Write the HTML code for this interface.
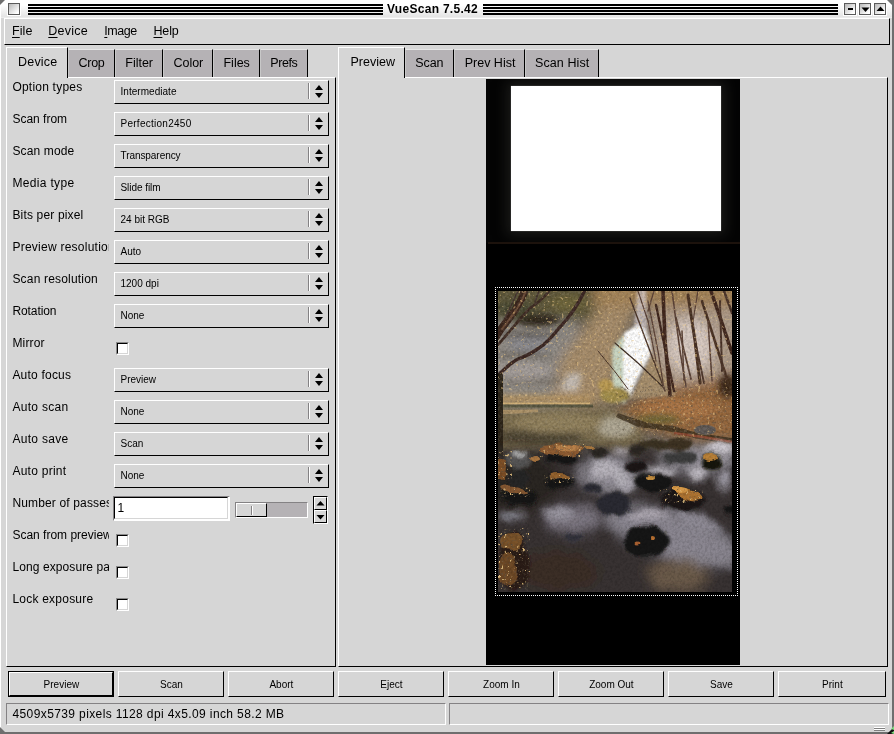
<!DOCTYPE html><html><head><meta charset="utf-8"><title>VueScan 7.5.42</title><style>
html,body{margin:0;padding:0;}
body{width:894px;height:734px;overflow:hidden;background:#6e6e6e;position:relative;font-family:"Liberation Sans",sans-serif;color:#000;}
div,span{position:absolute;box-sizing:border-box;}
.t{white-space:pre;line-height:16px;height:16px;}
#win{left:0;top:0;width:892px;height:732px;background:#d6d6d6;clip-path:polygon(5px 0,887px 0,892px 5px,892px 732px,5px 732px,0 727px,0 5px);overflow:hidden;will-change:transform;}
#title{left:0;top:0;width:892px;height:18px;background:linear-gradient(#ffffff 0,#ffffff 5px,#e4e4e4 17px,#f4f4f4 18px);}
.stripes{top:4px;height:11px;background:repeating-linear-gradient(#000 0,#000 2px,transparent 2px,transparent 3px);}
.wb{top:3px;width:12px;height:12px;border:1px solid #5a5a5a;background:linear-gradient(135deg,#b8b8b8,#fff 85%);box-shadow:0 0 0 1px #fff;}
.raise{border:1px solid;border-color:#fff #000 #000 #fff;background:#d6d6d6;}
.tab{background:#b5b2b5;border-top:1px solid #e6e6e6;border-right:1px solid #000;border-left:1px solid #c8c8c8;}
.tabsel{background:#d6d6d6;border-top:1px solid #fff;border-left:1px solid #fff;border-right:1px solid #000;}
.dd{border:1px solid;border-color:#fff #000 #000 #fff;background:#d6d6d6;width:215px;height:24px;left:114px;}
.dd i{position:absolute;left:193px;top:2px;width:0;height:16px;border-left:1px solid #848284;border-right:1px solid #fff;}
.dd svg{position:absolute;left:199px;top:3px;}
.cb{width:13px;height:13px;left:116px;border:1px solid;border-color:#8a8a8a #fff #fff #8a8a8a;background:#fff;}
.cb:before{content:"";position:absolute;left:0;top:0;width:11px;height:11px;box-sizing:border-box;border:1px solid;border-color:#000 #d6d6d6 #d6d6d6 #000;}
.btn{top:671px;width:106px;height:26px;border:1px solid;border-color:#fff #000 #000 #fff;background:#d6d6d6;}
.t u{text-decoration:underline;text-underline-offset:2px;text-decoration-thickness:1px;}
.inset{border:1px solid;border-color:#848284 #fff #fff #848284;}
</style></head><body>
<div id="win">
<div id="title"></div>
<div class="wb" style="left:8px"></div>
<div class="stripes" style="left:28px;width:355px"></div>
<div class="stripes" style="left:483px;width:355px"></div>
<span class="t" style="left:387.00px;top:0.84px;font-size:12px;letter-spacing:0.290px;font-weight:bold;">VueScan 7.5.42</span>
<div class="wb" style="left:844px">
<div style="left:3px;top:4px;width:5px;height:2px;background:#000"></div>
</div>
<div class="wb" style="left:859px">
<svg width="11" height="11" style="position:absolute;left:0;top:0"><path d="M1.5 3.5h8l-4 4.5z" fill="#000"/></svg>
</div>
<div class="wb" style="left:874px">
<svg width="11" height="11" style="position:absolute;left:0;top:0"><path d="M1.5 7h8l-4-4.5z" fill="#000"/></svg>
</div>
<div style="left:0;top:6px;width:1px;height:722px;background:#fff"></div>
<div class="raise" style="left:4px;top:18px;width:886px;height:27px"></div>
<span class="t" style="left:12.00px;top:22.67px;font-size:12.5px;letter-spacing:0.090px;"><u>F</u>ile</span>
<span class="t" style="left:48.30px;top:22.67px;font-size:12.5px;letter-spacing:0.215px;"><u>D</u>evice</span>
<span class="t" style="left:104.30px;top:22.67px;font-size:12.5px;letter-spacing:-0.448px;"><u>I</u>mage</span>
<span class="t" style="left:153.50px;top:22.67px;font-size:12.5px;letter-spacing:-0.177px;"><u>H</u>elp</span>
<div style="left:6px;top:77px;width:330px;height:590px;border:1px solid;border-color:#fff #000 #000 #fff;background:#d6d6d6"></div>
<div class="tabsel" style="left:6px;top:47px;width:62px;height:31px"></div>
<div class="tab" style="left:68px;top:49px;width:47px;height:28px"></div>
<div class="tab" style="left:115px;top:49px;width:48px;height:28px"></div>
<div class="tab" style="left:163px;top:49px;width:50px;height:28px"></div>
<div class="tab" style="left:213px;top:49px;width:47px;height:28px"></div>
<div class="tab" style="left:260px;top:49px;width:48px;height:28px"></div>
<span class="t" style="left:18.00px;top:54.17px;font-size:12.5px;letter-spacing:0.215px;">Device</span>
<span class="t" style="left:78.50px;top:55.37px;font-size:12.5px;letter-spacing:-0.273px;">Crop</span>
<span class="t" style="left:125.30px;top:55.37px;font-size:12.5px;letter-spacing:-0.013px;">Filter</span>
<span class="t" style="left:173.40px;top:55.37px;font-size:12.5px;letter-spacing:0.006px;">Color</span>
<span class="t" style="left:223.50px;top:55.37px;font-size:12.5px;letter-spacing:-0.018px;">Files</span>
<span class="t" style="left:270.20px;top:55.37px;font-size:12.5px;letter-spacing:-0.375px;">Prefs</span>
<div style="left:7px;top:78px;width:101.5px;height:560px;overflow:hidden">
<span class="t" style="left:5.40px;top:0.64px;font-size:12px;letter-spacing:0.219px;">Option types</span>
<span class="t" style="left:5.40px;top:32.64px;font-size:12px;letter-spacing:0.002px;">Scan from</span>
<span class="t" style="left:5.40px;top:64.64px;font-size:12px;letter-spacing:0.144px;">Scan mode</span>
<span class="t" style="left:5.40px;top:96.64px;font-size:12px;letter-spacing:0.330px;">Media type</span>
<span class="t" style="left:5.40px;top:128.64px;font-size:12px;letter-spacing:0.165px;">Bits per pixel</span>
<span class="t" style="left:5.40px;top:160.64px;font-size:12px;letter-spacing:0.248px;">Preview resolution</span>
<span class="t" style="left:5.40px;top:192.64px;font-size:12px;letter-spacing:0.186px;">Scan resolution</span>
<span class="t" style="left:5.40px;top:224.64px;font-size:12px;letter-spacing:-0.087px;">Rotation</span>
<span class="t" style="left:5.40px;top:256.64px;font-size:12px;letter-spacing:0.163px;">Mirror</span>
<span class="t" style="left:5.40px;top:288.64px;font-size:12px;letter-spacing:0.210px;">Auto focus</span>
<span class="t" style="left:5.40px;top:320.64px;font-size:12px;letter-spacing:0.293px;">Auto scan</span>
<span class="t" style="left:5.40px;top:352.64px;font-size:12px;letter-spacing:0.293px;">Auto save</span>
<span class="t" style="left:5.40px;top:384.64px;font-size:12px;letter-spacing:0.264px;">Auto print</span>
<span class="t" style="left:5.40px;top:416.64px;font-size:12px;letter-spacing:0.151px;">Number of passes</span>
<span class="t" style="left:5.40px;top:448.64px;font-size:12px;">Scan from preview</span>
<span class="t" style="left:5.40px;top:480.64px;font-size:12px;letter-spacing:0.096px;">Long exposure pass</span>
<span class="t" style="left:5.40px;top:512.64px;font-size:12px;letter-spacing:0.227px;">Lock exposure</span>
</div>
<div class="dd" style="top:80px"><i></i><svg width="10" height="16" viewBox="0 0 10 16"><path d="M1 6h8l-4-5zM1 9h8l-4 5z" fill="#000"/></svg></div>
<span class="t" style="left:120.50px;top:84.03px;font-size:10px;letter-spacing:0.035px;">Intermediate</span>
<div class="dd" style="top:112px"><i></i><svg width="10" height="16" viewBox="0 0 10 16"><path d="M1 6h8l-4-5zM1 9h8l-4 5z" fill="#000"/></svg></div>
<span class="t" style="left:120.50px;top:116.03px;font-size:10px;letter-spacing:0.266px;">Perfection2450</span>
<div class="dd" style="top:144px"><i></i><svg width="10" height="16" viewBox="0 0 10 16"><path d="M1 6h8l-4-5zM1 9h8l-4 5z" fill="#000"/></svg></div>
<span class="t" style="left:120.50px;top:148.03px;font-size:10px;letter-spacing:-0.064px;">Transparency</span>
<div class="dd" style="top:176px"><i></i><svg width="10" height="16" viewBox="0 0 10 16"><path d="M1 6h8l-4-5zM1 9h8l-4 5z" fill="#000"/></svg></div>
<span class="t" style="left:120.50px;top:180.03px;font-size:10px;letter-spacing:-0.057px;">Slide film</span>
<div class="dd" style="top:208px"><i></i><svg width="10" height="16" viewBox="0 0 10 16"><path d="M1 6h8l-4-5zM1 9h8l-4 5z" fill="#000"/></svg></div>
<span class="t" style="left:120.50px;top:212.03px;font-size:10px;">24 bit RGB</span>
<div class="dd" style="top:240px"><i></i><svg width="10" height="16" viewBox="0 0 10 16"><path d="M1 6h8l-4-5zM1 9h8l-4 5z" fill="#000"/></svg></div>
<span class="t" style="left:120.50px;top:244.03px;font-size:10px;">Auto</span>
<div class="dd" style="top:272px"><i></i><svg width="10" height="16" viewBox="0 0 10 16"><path d="M1 6h8l-4-5zM1 9h8l-4 5z" fill="#000"/></svg></div>
<span class="t" style="left:120.50px;top:276.04px;font-size:10px;">1200 dpi</span>
<div class="dd" style="top:304px"><i></i><svg width="10" height="16" viewBox="0 0 10 16"><path d="M1 6h8l-4-5zM1 9h8l-4 5z" fill="#000"/></svg></div>
<span class="t" style="left:120.50px;top:308.04px;font-size:10px;">None</span>
<div class="cb" style="top:342px"></div>
<div class="dd" style="top:368px"><i></i><svg width="10" height="16" viewBox="0 0 10 16"><path d="M1 6h8l-4-5zM1 9h8l-4 5z" fill="#000"/></svg></div>
<span class="t" style="left:120.50px;top:372.04px;font-size:10px;">Preview</span>
<div class="dd" style="top:400px"><i></i><svg width="10" height="16" viewBox="0 0 10 16"><path d="M1 6h8l-4-5zM1 9h8l-4 5z" fill="#000"/></svg></div>
<span class="t" style="left:120.50px;top:404.04px;font-size:10px;">None</span>
<div class="dd" style="top:432px"><i></i><svg width="10" height="16" viewBox="0 0 10 16"><path d="M1 6h8l-4-5zM1 9h8l-4 5z" fill="#000"/></svg></div>
<span class="t" style="left:120.50px;top:436.04px;font-size:10px;">Scan</span>
<div class="dd" style="top:464px"><i></i><svg width="10" height="16" viewBox="0 0 10 16"><path d="M1 6h8l-4-5zM1 9h8l-4 5z" fill="#000"/></svg></div>
<span class="t" style="left:120.50px;top:468.04px;font-size:10px;">None</span>
<div style="left:113px;top:496px;width:117px;height:25px;border:1px solid;border-color:#848284 #fff #fff #848284;background:#fff"><div style="left:0;top:0;width:114px;height:22px;border:1px solid;border-color:#000 #d6d6d6 #d6d6d6 #000"></div></div>
<span class="t" style="left:117.50px;top:500.34px;font-size:12px;">1</span>
<div style="left:235px;top:502px;width:73px;height:16px;background:#b5b2b5;border:1px solid;border-color:#848284 #fff #fff #848284"></div>
<div class="raise" style="left:236px;top:503px;width:31px;height:14px"><div style="left:14px;top:2px;width:2px;height:9px;border-left:1px solid #848284;border-right:1px solid #fff"></div></div>
<div style="left:313px;top:496px;width:15px;height:28px;border:1px solid;border-color:#000 #fff #fff #000;background:#d6d6d6"><div class="raise" style="left:0;top:0;width:13px;height:13px"></div><div class="raise" style="left:0;top:13px;width:13px;height:13px"></div><svg width="13" height="26" style="position:absolute;left:0;top:0"><path d="M2.5 8.5h8l-4-4.5zM2.5 18h8l-4 4.5z" fill="#000"/></svg></div>
<div class="cb" style="top:534px"></div>
<div class="cb" style="top:566px"></div>
<div class="cb" style="top:598px"></div>
<div style="left:338px;top:77px;width:550px;height:590px;border:1px solid;border-color:#fff #000 #000 #fff;background:#d6d6d6"></div>
<div class="tabsel" style="left:338px;top:47px;width:67px;height:31px"></div>
<div class="tab" style="left:405px;top:49px;width:49px;height:28px"></div>
<div class="tab" style="left:454px;top:49px;width:71px;height:28px"></div>
<div class="tab" style="left:525px;top:49px;width:74px;height:28px"></div>
<span class="t" style="left:350.40px;top:54.17px;font-size:12.5px;letter-spacing:0.035px;">Preview</span>
<span class="t" style="left:415.20px;top:55.37px;font-size:12.5px;letter-spacing:-0.073px;">Scan</span>
<span class="t" style="left:464.70px;top:55.37px;font-size:12.5px;">Prev Hist</span>
<span class="t" style="left:535.10px;top:55.37px;font-size:12.5px;letter-spacing:0.079px;">Scan Hist</span>
<div id="img" style="left:486px;top:79px;width:254px;height:586px;background:#000;overflow:hidden">
<div style="left:0;top:0;width:254px;height:164px;overflow:hidden;background:#040404"><div style="left:35px;top:17px;width:190px;height:125px;box-shadow:0 0 12px 14px #1b1b19"></div></div>
<div style="left:1px;top:0;width:253px;height:586px">
<div style="left:24px;top:7px;width:210px;height:145px;background:#fff;box-shadow:0 0 1px 0 #888"></div>
<div style="left:1px;top:163px;width:252px;height:2px;background:#1c120c"></div>
<div style="left:8px;top:208px;width:243px;height:1px;background:repeating-linear-gradient(90deg,#fff 0,#fff 1px,#000 1px,#000 2px)"></div>
<div style="left:8px;top:516px;width:243px;height:1px;background:repeating-linear-gradient(90deg,#fff 0,#fff 1px,#000 1px,#000 2px)"></div>
<div style="left:8px;top:208px;width:1px;height:309px;background:repeating-linear-gradient(#fff 0,#fff 1px,#000 1px,#000 2px)"></div>
<div style="left:250px;top:208px;width:1px;height:309px;background:repeating-linear-gradient(#fff 0,#fff 1px,#000 1px,#000 2px)"></div>
<svg width="234" height="301" viewBox="0 0 234 301" style="position:absolute;left:11px;top:212px">
<defs>
<filter id="b8" x="-30%" y="-30%" width="160%" height="160%"><feGaussianBlur stdDeviation="6"/></filter>
<filter id="b4" x="-30%" y="-30%" width="160%" height="160%"><feGaussianBlur stdDeviation="3"/></filter>
<filter id="b2" x="-30%" y="-30%" width="160%" height="160%"><feGaussianBlur stdDeviation="1.5"/></filter>
<filter id="b1" x="-30%" y="-30%" width="160%" height="160%"><feGaussianBlur stdDeviation="0.7"/></filter>
<filter id="sp" x="0" y="0" width="100%" height="100%"><feTurbulence type="fractalNoise" baseFrequency="0.33" numOctaves="3" seed="7" result="n"/>
<feColorMatrix in="n" type="matrix" values="0 0 0 0 0.84  0 0 0 0 0.58  0 0 0 0 0.24  6 6 0 0 -7.2"/></filter>
<filter id="spd" x="0" y="0" width="100%" height="100%"><feTurbulence type="fractalNoise" baseFrequency="0.45" numOctaves="2" seed="11" result="n"/>
<feColorMatrix in="n" type="matrix" values="0 0 0 0 0.12  0 0 0 0 0.09  0 0 0 0 0.06  -3.2 -3.2 0 0 2.9"/></filter>
<filter id="warp" x="0" y="0" width="100%" height="100%"><feTurbulence type="fractalNoise" baseFrequency="0.06" numOctaves="2" seed="4" result="t"/><feDisplacementMap in="SourceGraphic" in2="t" scale="9" xChannelSelector="R" yChannelSelector="G"/></filter>
<filter id="grain" x="0" y="0" width="100%" height="100%"><feTurbulence type="fractalNoise" baseFrequency="0.4" numOctaves="2" seed="9" result="n"/>
<feColorMatrix in="n" type="matrix" values="0 0 0 0 0  0 0 0 0 0  0 0 0 0 0  2.2 0 0 0 -0.85"/></filter>
<filter id="grainw" x="0" y="0" width="100%" height="100%"><feTurbulence type="fractalNoise" baseFrequency="0.4" numOctaves="2" seed="21" result="n"/>
<feColorMatrix in="n" type="matrix" values="0 0 0 0 1  0 0 0 0 0.95  0 0 0 0 0.9  2.2 0 0 0 -0.9"/></filter>
<clipPath id="pc"><rect x="0" y="0" width="234" height="301"/></clipPath>
<clipPath id="cTop"><polygon points="0,0 234,0 234,135 190,150 130,140 118,112 0,112"/></clipPath>
<clipPath id="cLeaf"><path d="M42,152h44v14h-44zM0,160h14v28h-14zM0,237h32v63h-32zM161,198h44v14h-44zM46,184h30v8h-30zM2,196h30v10h-30z"/></clipPath>
</defs>
<g clip-path="url(#pc)">
<rect width="234" height="301" fill="#6b6258"/>
<g filter="url(#b8)">
<rect x="-20" y="-20" width="125" height="50" fill="#5c5438"/>
<rect x="-20" y="30" width="100" height="85" fill="#8d8882"/>
<polygon points="55,112 62,70 95,25 125,-10 150,-10 125,45 112,112" fill="#a48a68"/>
<rect x="150" y="-20" width="110" height="125" fill="#ab9886"/>
<rect x="95" y="-20" width="165" height="36" fill="#a08054"/>
<ellipse cx="192" cy="55" rx="24" ry="28" fill="#d6c8c0"/>
<rect x="-20" y="116" width="165" height="45" fill="#786a4c"/>
<polygon points="118,120 160,98 260,82 260,148 190,150 150,138" fill="#93653a"/>
</g>
<g filter="url(#b4)">
<ellipse cx="40" cy="29" rx="22" ry="6" fill="#2a2418"/>
<ellipse cx="32" cy="53" rx="22" ry="8" fill="#88878b"/>
<ellipse cx="30" cy="44" rx="30" ry="2.5" fill="#55504a"/>
<ellipse cx="26" cy="64" rx="28" ry="2" fill="#5e5850"/>
<ellipse cx="40" cy="90" rx="36" ry="2" fill="#6e665c"/>
<ellipse cx="18" cy="18" rx="20" ry="8" fill="#4a4a30"/>
<ellipse cx="70" cy="12" rx="18" ry="8" fill="#6a6238"/>
<ellipse cx="25" cy="80" rx="28" ry="9" fill="#a09a96"/>
<polygon points="61,100 70,82 84,82 80,100" fill="#c4bcb4"/>
<rect x="-5" y="104" width="100" height="8" fill="#b4925e"/>
<ellipse cx="229" cy="95" rx="9" ry="12" fill="#3a2818"/>
<ellipse cx="180" cy="118" rx="40" ry="10" fill="#a87242"/>
<ellipse cx="160" cy="128" rx="22" ry="5" fill="#6c6430"/>
<ellipse cx="118" cy="136" rx="20" ry="11" fill="#aca490"/>
<ellipse cx="40" cy="146" rx="45" ry="8" fill="#4e4432"/>
<ellipse cx="60" cy="132" rx="45" ry="10" fill="#8e7e5a"/>
</g>
<g filter="url(#b2)">
<polygon points="114,58 120,50 128,42 128,112 115,112" fill="#c8d4c0"/>
<polygon points="131,44 136,36 140,-4 148,-4 149,44" fill="#d8d0d4" opacity="0.7"/>
<polygon points="126,42 134,37 141,34 147,38 152,50 153,62 138,91 132,106 126,108 125,66" fill="#ffffff"/>
<polygon points="154,62 178,104 132,108" fill="#a48c6a"/>
<ellipse cx="117" cy="104" rx="15" ry="8" fill="#a08c48"/>
<ellipse cx="108" cy="94" rx="8" ry="6" fill="#b89850"/>
</g>
<g filter="url(#b1)">
<rect x="0" y="111.5" width="92" height="2" fill="#d0ae74"/>
<rect x="0" y="113.5" width="95" height="3" fill="#50503a" opacity="0.85"/>
<polygon points="3,119 40,118.5 40,121 20,122.5 3,123" fill="#ac9268"/>
<path d="M120,122 L150,132 L175,135 L200,142 L234,147 L234,153 L200,148 L170,140 L140,136 L118,126z" fill="#3a2c1c" opacity="0.8"/>
<ellipse cx="207" cy="139" rx="11" ry="5" fill="#5c5752"/>
<path d="M176,142 L205,146 L234,151" stroke="#8a4a30" stroke-width="2.5" fill="none"/>
</g>
<g filter="url(#b1)" fill="none" stroke-linecap="round">
<path d="M27,-2 C24,12 12,26 3,38 L-2,46" stroke="#3a261c" stroke-width="7.5"/>
<path d="M28,-2 C25,12 13,26 4,38" stroke="#6a4a36" stroke-width="2"/>
<path d="M52,-1 C44,10 36,14 31,18 C20,30 8,45 -1,55" stroke="#3c2a20" stroke-width="2.6"/>
<path d="M87,-1 C80,14 70,28 61,37 C54,46 46,54 41,57 C34,62 26,66 20,68 C12,72 5,80 -1,85" stroke="#3a2820" stroke-width="3.4"/>
<path d="M20,0 L7,27" stroke="#40302a" stroke-width="1.5"/>
<path d="M41,0 L37,11" stroke="#40302a" stroke-width="1.5"/>
<path d="M2,85 L2,165" stroke="#2a2018" stroke-width="6"/>
<path d="M132,7 L167,100" stroke="#4a3428" stroke-width="1.4"/>
<path d="M165,0 L167,50 L172,104" stroke="#40281e" stroke-width="3.6"/>
<path d="M190,4 L197,50 L202,92" stroke="#4a3024" stroke-width="3"/>
<path d="M213,0 L225,35 L234,62" stroke="#40281e" stroke-width="3.6"/>
<path d="M204,10 L229,88" stroke="#4a3024" stroke-width="2.6"/>
<path d="M117,52 L140,72 L165,96" stroke="#3a2a20" stroke-width="1.2"/>
<path d="M178,27 L193,88" stroke="#5a4034" stroke-width="1.8"/>
<path d="M150,10 L160,60 L166,98" stroke="#5a4034" stroke-width="1.3"/>
<path d="M184,40 L186,92" stroke="#5a4034" stroke-width="1.5"/>
<path d="M210,30 L214,90" stroke="#5a4034" stroke-width="1.5"/>
<path d="M156,0 L150,20" stroke="#5a4034" stroke-width="1.3"/>
<path d="M200,0 L195,30" stroke="#5a4034" stroke-width="1.3"/>
<path d="M158,14 L176,100" stroke="#40281e" stroke-width="2.4"/>
<path d="M174,0 L182,60 L188,96" stroke="#5a4034" stroke-width="1.6"/>
<path d="M222,10 L224,80" stroke="#4a3228" stroke-width="2"/>
<path d="M196,44 L206,92" stroke="#4a3228" stroke-width="1.8"/>
<path d="M140,0 L150,30 L158,70" stroke="#5a4034" stroke-width="1.2"/>
<path d="M226,0 L234,22" stroke="#4a3228" stroke-width="2.5"/>
<path d="M100,60 L118,82 L130,98" stroke="#4a3428" stroke-width="1"/>
</g>
<g filter="url(#warp)">
<g filter="url(#b8)">
<rect x="-20" y="158" width="280" height="170" fill="#383232"/>
<ellipse cx="20" cy="190" rx="40" ry="30" fill="#2c2622"/>
<ellipse cx="110" cy="183" rx="30" ry="17" fill="#908c94"/>
<ellipse cx="175" cy="245" rx="70" ry="22" fill="#8a8690" transform="rotate(18 175 245)"/>
<ellipse cx="75" cy="228" rx="28" ry="14" fill="#7c7680"/>
<ellipse cx="200" cy="168" rx="38" ry="13" fill="#908c94"/>
<ellipse cx="180" cy="285" rx="30" ry="16" fill="#6a5a4a"/>
<ellipse cx="60" cy="280" rx="40" ry="20" fill="#3a2e26"/>
</g>
<g filter="url(#b4)">
<ellipse cx="150" cy="224" rx="20" ry="5" fill="#b0aab4"/>
<ellipse cx="106" cy="178" rx="14" ry="9" fill="#b8b4bc"/>
<ellipse cx="128" cy="195" rx="10" ry="6" fill="#a8a4ae"/>
<ellipse cx="222" cy="158" rx="14" ry="6" fill="#d0ccd4"/>
<ellipse cx="200" cy="182" rx="10" ry="6" fill="#c4c0c8"/>
<ellipse cx="170" cy="182" rx="8" ry="4" fill="#c0bcc4"/>
<ellipse cx="226" cy="190" rx="8" ry="10" fill="#9a96a0"/>
<ellipse cx="123" cy="185" rx="7" ry="12" fill="#b4b0b8"/>
<ellipse cx="60" cy="222" rx="14" ry="6" fill="#9a96a0"/>
<ellipse cx="200" cy="232" rx="24" ry="8" fill="#8e8a94" transform="rotate(20 200 232)"/>
<ellipse cx="158" cy="178" rx="12" ry="4" fill="#c0bcc4"/>
<ellipse cx="123" cy="160" rx="8" ry="4" fill="#b0aab0"/>
<ellipse cx="14" cy="225" rx="14" ry="4" fill="#8a8a94"/>
</g>
<g filter="url(#b2)">
<ellipse cx="20" cy="168" rx="13" ry="11" fill="#575555"/>
<ellipse cx="22" cy="162" rx="9" ry="4" fill="#a0a0a0"/>
<ellipse cx="64" cy="167" rx="17" ry="6" fill="#161414"/>
<ellipse cx="21" cy="187" rx="11" ry="8" fill="#262626"/>
<ellipse cx="62" cy="191" rx="16" ry="7" fill="#181818"/>
<ellipse cx="21" cy="206" rx="19" ry="9" fill="#161412" transform="rotate(8 21 206)"/>
<ellipse cx="95" cy="197" rx="10" ry="5" fill="#2a2a30"/>
<ellipse cx="116" cy="213" rx="17" ry="12" fill="#2a2c30"/>
<ellipse cx="139" cy="175" rx="10.5" ry="7" fill="#1a1818"/>
<ellipse cx="154" cy="192" rx="20" ry="9" fill="#181614"/>
<ellipse cx="184" cy="209" rx="22" ry="11" fill="#1a1814"/>
<ellipse cx="149" cy="250" rx="23" ry="16" fill="#161412"/>
<ellipse cx="182" cy="167" rx="17" ry="7" fill="#3c3c3c"/>
<ellipse cx="214" cy="171" rx="9" ry="8" fill="#181410"/>
<ellipse cx="231" cy="219" rx="6" ry="6" fill="#141414"/>
<ellipse cx="100" cy="162" rx="11" ry="5" fill="#2a2620"/>
<ellipse cx="139" cy="160" rx="8" ry="4" fill="#2a2622"/>
<ellipse cx="157" cy="154" rx="17" ry="5" fill="#3a3020"/>
<ellipse cx="182" cy="153" rx="13" ry="7" fill="#3c3222"/>
<ellipse cx="16" cy="270" rx="15" ry="30" fill="#2a1e16"/>
<ellipse cx="75" cy="245" rx="10" ry="4" fill="#30303a"/>
</g>
<g filter="url(#b1)">
<ellipse cx="64" cy="159" rx="21" ry="6.5" fill="#8e5c30"/>
<ellipse cx="70" cy="157" rx="12" ry="3.5" fill="#b88048"/>
<ellipse cx="4" cy="178" rx="5" ry="11" fill="#7e5028"/>
<ellipse cx="62" cy="186" rx="11" ry="3" fill="#96642e"/>
<ellipse cx="16" cy="199" rx="14" ry="4" fill="#865830" transform="rotate(10 16 199)"/>
<ellipse cx="190" cy="203" rx="14" ry="5" fill="#b07430" transform="rotate(18 190 203)"/>
<ellipse cx="182" cy="199" rx="8" ry="3" fill="#d89a48"/>
<ellipse cx="213" cy="166" rx="6" ry="3" fill="#b88038"/>
<ellipse cx="14" cy="250" rx="12" ry="8" fill="#7a522c"/>
<ellipse cx="10" cy="278" rx="9" ry="16" fill="#6e4828"/>
<ellipse cx="37" cy="168" rx="5" ry="3" fill="#a87440"/>
<ellipse cx="153" cy="186" rx="4" ry="2" fill="#c89040"/>
<ellipse cx="156" cy="248" rx="3" ry="2" fill="#b87030"/>
<ellipse cx="140" cy="251" rx="2.5" ry="1.5" fill="#a86030"/>
<ellipse cx="90" cy="158" rx="4" ry="2" fill="#a87840"/>
</g>
</g>
<rect x="0" y="0" width="234" height="150" filter="url(#sp)" clip-path="url(#cTop)" opacity="0.5"/>
<rect x="0" y="150" width="234" height="151" filter="url(#sp)" clip-path="url(#cLeaf)" opacity="0.9"/>
<rect x="118" y="95" width="116" height="50" filter="url(#spd)" opacity="0.55"/>
<rect x="0" y="150" width="234" height="151" filter="url(#spd)" clip-path="url(#cLeaf)" opacity="0.6"/>
<rect x="0" y="0" width="234" height="301" filter="url(#grain)" opacity="0.16"/>
<rect x="0" y="0" width="234" height="150" filter="url(#grainw)" opacity="0.12"/>
</g></svg>
</div>
</div>
<div style="left:8px;top:671px;width:106px;height:26px;border:1px solid #000;background:#d6d6d6"><div class="raise" style="left:0;top:0;width:104px;height:24px"></div></div>
<span class="t" style="left:43.62px;top:676.53px;font-size:10px;">Preview</span>
<div class="btn" style="left:118px;width:106px"></div>
<span class="t" style="left:160.00px;top:676.53px;font-size:10px;">Scan</span>
<div class="btn" style="left:228px;width:106px"></div>
<span class="t" style="left:269.45px;top:676.53px;font-size:10px;">Abort</span>
<div class="btn" style="left:338px;width:106px"></div>
<span class="t" style="left:380.28px;top:676.53px;font-size:10px;">Eject</span>
<div class="btn" style="left:448px;width:106px"></div>
<span class="t" style="left:483.06px;top:676.53px;font-size:10px;">Zoom In</span>
<div class="btn" style="left:558px;width:106px"></div>
<span class="t" style="left:589.17px;top:676.53px;font-size:10px;">Zoom Out</span>
<div class="btn" style="left:668px;width:106px"></div>
<span class="t" style="left:710.00px;top:676.53px;font-size:10px;">Save</span>
<div class="btn" style="left:778px;width:108px"></div>
<span class="t" style="left:822.12px;top:676.53px;font-size:10px;">Print</span>
<div class="inset" style="left:6px;top:703px;width:440px;height:22px"></div>
<div class="inset" style="left:449px;top:703px;width:440px;height:22px"></div>
<span class="t" style="left:12.50px;top:705.84px;font-size:12px;letter-spacing:0.386px;">4509x5739 pixels 1128 dpi 4x5.09 inch 58.2 MB</span>
<div style="left:874px;top:727px;width:11px;height:4px;background:linear-gradient(#fff 0,#fff 1px,#808080 1px,#808080 2px,#fff 2px,#fff 3px,#808080 3px)"></div>
</div>
<svg width="8" height="9" style="position:absolute;left:886px;top:725px"><path d="M8 2L1 9h7z" fill="#111"/><path d="M8 1L5 4l3 1zM8 6L5 8l3 1z" fill="#7fdc7f"/></svg>
</body></html>
